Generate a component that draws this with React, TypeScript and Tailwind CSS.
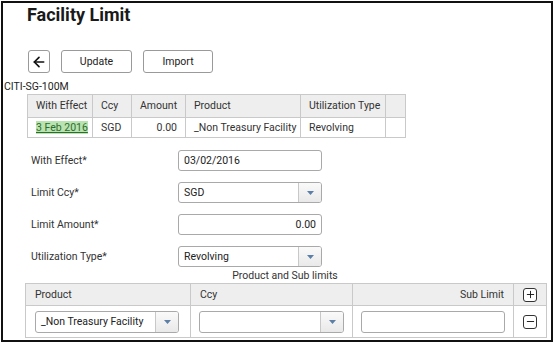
import { ArrowLeft, Minus, Plus } from 'lucide-react'

const font = { fontFamily: 'Roboto, "Liberation Sans", sans-serif' }

function Caret() {
  return (
    <span className="flex w-[23px] items-center justify-center self-stretch border-l border-[#c8c8c8] bg-gradient-to-b from-[#fafafa] to-[#e9e9e9]">
      <svg width="7" height="4" viewBox="0 0 7 4">
        <path d="M0 0h7L3.5 4z" fill="#5b7fa6" />
      </svg>
    </span>
  )
}

function Select({ value, className }: { value: string; className: string }) {
  return (
    <div
      className={`flex items-center overflow-hidden rounded-[3px] border border-[#a9a9a9] bg-white text-[10.5px] text-[#222] ${className}`}
    >
      <span className="flex-1 truncate whitespace-nowrap pl-[5px]">{value}</span>
      <Caret />
    </div>
  )
}

function Input({ value, right, className }: { value: string; right?: boolean; className: string }) {
  return (
    <div
      className={`flex items-center rounded-[3px] border border-[#a9a9a9] bg-white px-[5px] text-[10.5px] text-[#222] ${
        right ? 'justify-end' : ''
      } ${className}`}
    >
      {value}
    </div>
  )
}

function FormRow({ label, children }: { label: string; children: React.ReactNode }) {
  return (
    <div className="flex h-[21px] items-center">
      <span className="w-[147px] text-[10.5px] text-[#333]">{label}</span>
      {children}
    </div>
  )
}

const cell = 'border border-[#c9c9c9] px-[8px] whitespace-nowrap overflow-hidden'

export default function App() {
  const cols = [
    { h: 'With Effect', w: 'w-[65px]' },
    { h: 'Ccy', w: 'w-[39px]' },
    { h: 'Amount', w: 'w-[54px]' },
    { h: 'Product', w: 'w-[115px]' },
    { h: 'Utilization Type', w: 'w-[85px]' },
    { h: '', w: 'w-[20px]' },
  ]
  return (
    <div className="bg-white pl-px pt-px" style={font}>
      <div className="flex h-[341px] w-[552px] flex-col overflow-hidden border-2 border-[#111] bg-white">
        <h1 className="ml-[24px] mt-[1px] text-[18px] font-bold leading-[22px] text-[#1a1a1a]">Facility Limit</h1>

        <div className="ml-[25px] mt-[24px] flex gap-[11px]">
          <button className="flex h-[23px] w-[22px] items-center justify-center rounded-[3px] border border-[#9a9a9a] bg-white">
            <ArrowLeft size={16} strokeWidth={2.5} color="#111" />
          </button>
          <button className="h-[23px] w-[71px] rounded-[3px] border border-[#9a9a9a] bg-white text-[10.5px] text-[#222]">
            Update
          </button>
          <button className="h-[23px] w-[70px] rounded-[3px] border border-[#9a9a9a] bg-white text-[10.5px] text-[#222]">
            Import
          </button>
        </div>

        <div className="ml-[1px] mt-[8px] text-[10.5px] leading-[12px] text-[#222]">CITI-SG-100M</div>

        <table className="ml-[24px] mt-px w-[378px] table-fixed border-collapse text-[10.5px] text-[#333]">
          <thead>
            <tr className="h-[23px] bg-[#eeeeee]">
              {cols.map((c, i) => (
                <th key={i} className={`${c.w} ${cell} text-left font-normal`}>
                  {c.h}
                </th>
              ))}
            </tr>
          </thead>
          <tbody>
            <tr className="h-[20px]">
              <td className={cell}>
                <span className="bg-[#b9e3b0] text-[#2e6b2e] underline">3 Feb 2016</span>
              </td>
              <td className={cell}>SGD</td>
              <td className={`${cell} text-right`}>0.00</td>
              <td className={cell}>_Non Treasury Facility</td>
              <td className={cell}>Revolving</td>
              <td className={cell} />
            </tr>
          </tbody>
        </table>

        <div className="ml-[28px] mt-[12px] flex flex-col gap-[11px]">
          <FormRow label="With Effect*">
            <Input value="03/02/2016" className="h-[21px] w-[144px]" />
          </FormRow>
          <FormRow label="Limit Ccy*">
            <Select value="SGD" className="h-[21px] w-[144px]" />
          </FormRow>
          <FormRow label="Limit Amount*">
            <Input value="0.00" right className="h-[21px] w-[144px]" />
          </FormRow>
          <FormRow label="Utilization Type*">
            <Select value="Revolving" className="h-[21px] w-[144px]" />
          </FormRow>
        </div>

        <div className="ml-[22px] mt-[2px] w-[520px] text-center text-[10.5px] leading-[13px] text-[#333]">
          Product and Sub limits
        </div>

        <table className="ml-[22px] mt-px w-[521px] table-fixed border-collapse text-[10.5px] text-[#333]">
          <thead>
            <tr className="h-[22px] bg-[#eeeeee]">
              <th className="w-[165px] border border-[#c9c9c9] px-[9px] text-left font-normal">Product</th>
              <th className="w-[162px] border border-[#c9c9c9] px-[9px] text-left font-normal">Ccy</th>
              <th className="w-[161px] border border-[#c9c9c9] px-[9px] text-right font-normal">Sub Limit</th>
              <th className="w-[33px] border border-[#c9c9c9]">
                <span className="mx-auto flex h-[14px] w-[14px] items-center justify-center rounded-[3px] border border-[#333] bg-white">
                  <Plus size={11} strokeWidth={2} color="#111" />
                </span>
              </th>
            </tr>
          </thead>
          <tbody>
            <tr className="h-[32px]">
              <td className="border border-[#c9c9c9] px-[9px]">
                <Select value="_Non Treasury Facility" className="h-[22px] w-[144px]" />
              </td>
              <td className="border border-[#c9c9c9] px-[8px]">
                <Select value="" className="h-[22px] w-[145px]" />
              </td>
              <td className="border border-[#c9c9c9] px-[8px]">
                <Input value="" className="h-[22px] w-[144px]" />
              </td>
              <td className="border border-[#c9c9c9]">
                <span className="mx-auto flex h-[14px] w-[14px] items-center justify-center rounded-[3px] border border-[#333] bg-white">
                  <Minus size={11} strokeWidth={2} color="#111" />
                </span>
              </td>
            </tr>
          </tbody>
        </table>
      </div>
    </div>
  )
}
